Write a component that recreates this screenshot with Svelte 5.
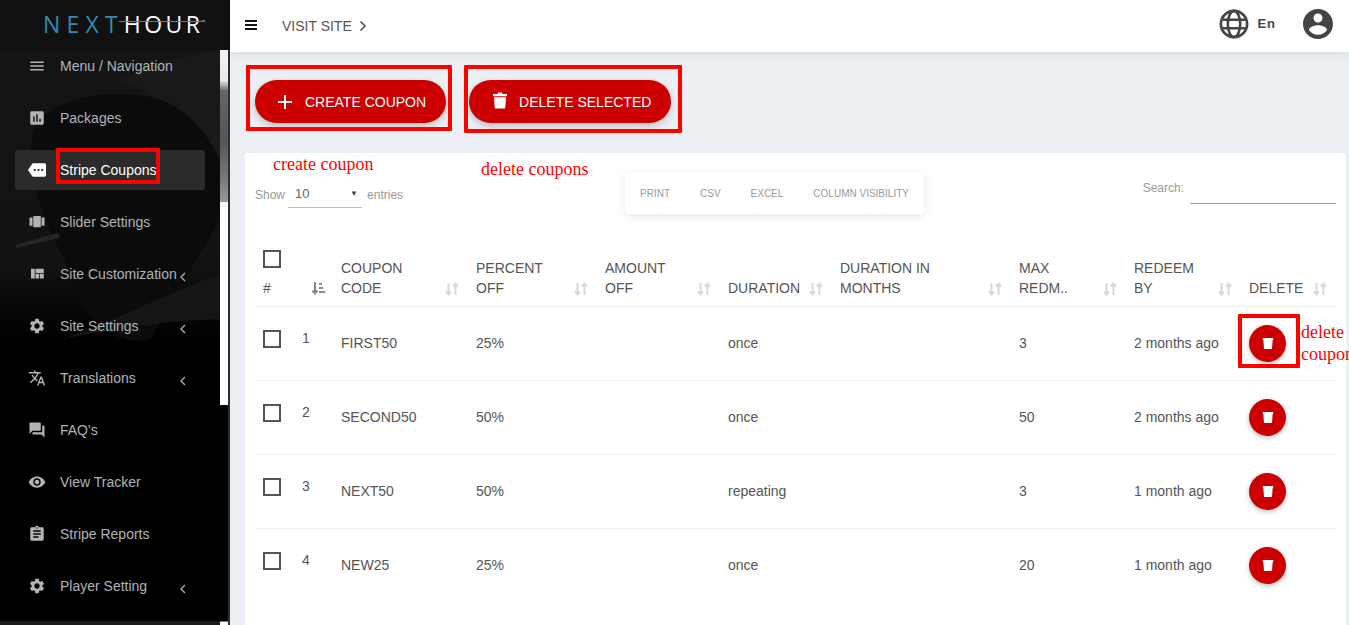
<script>
  const icons = {
    menu: 'M3 18h18v-2H3v2zm0-5h18v-2H3v2zm0-7v2h18V6H3z',
    poll: 'M19 3H5c-1.1 0-2 .9-2 2v14c0 1.1.9 2 2 2h14c1.1 0 2-.9 2-2V5c0-1.1-.9-2-2-2zM9 17H7v-7h2v7zm4 0h-2V7h2v10zm4 0h-2v-4h2v4z',
    more: 'M22 3H7c-.69 0-1.23.35-1.59.88L0 12l5.41 8.11c.36.53.9.89 1.59.89h15c1.1 0 2-.9 2-2V5c0-1.1-.9-2-2-2zM9 13.5c-.83 0-1.5-.67-1.5-1.5s.67-1.5 1.5-1.5 1.5.67 1.5 1.5-.67 1.5-1.5 1.5zm5 0c-.83 0-1.5-.67-1.5-1.5s.67-1.5 1.5-1.5 1.5.67 1.5 1.5-.67 1.5-1.5 1.5zm5 0c-.83 0-1.5-.67-1.5-1.5s.67-1.5 1.5-1.5 1.5.67 1.5 1.5-.67 1.5-1.5 1.5z',
    carousel: 'M7 19h10V4H7v15zm-5-2h4V6H2v11zM18 6v11h4V6h-4z',
    quilt: 'M10 18h5v-6h-5v6zm-6 0h5V5H4v13zm12 0h5v-6h-5v6zM10 5v6h11V5H10z',
    settings: 'M19.14 12.94c.04-.3.06-.61.06-.94 0-.32-.02-.64-.07-.94l2.03-1.58c.18-.14.23-.41.12-.61l-1.92-3.32c-.12-.22-.37-.29-.59-.22l-2.39.96c-.5-.38-1.03-.7-1.62-.94l-.36-2.54c-.04-.24-.24-.41-.48-.41h-3.84c-.24 0-.43.17-.47.41l-.36 2.54c-.59.24-1.13.57-1.62.94l-2.39-.96c-.22-.08-.47 0-.59.22L2.74 8.87c-.12.21-.08.47.12.61l2.03 1.58c-.05.3-.09.63-.09.94s.02.64.07.94l-2.03 1.58c-.18.14-.23.41-.12.61l1.92 3.32c.12.22.37.29.59.22l2.39-.96c.5.38 1.03.7 1.62.94l.36 2.54c.05.24.24.41.48.41h3.84c.24 0 .44-.17.47-.41l.36-2.54c.59-.24 1.13-.56 1.62-.94l2.39.96c.22.08.47 0 .59-.22l1.92-3.32c.12-.22.07-.47-.12-.61l-2.01-1.58zM12 15.6c-1.98 0-3.6-1.62-3.6-3.6s1.62-3.6 3.6-3.6 3.6 1.62 3.6 3.6-1.62 3.6-3.6 3.6z',
    translate: 'M12.87 15.07l-2.54-2.51.03-.03c1.74-1.94 2.98-4.17 3.71-6.53H17V4h-7V2H8v2H1v1.99h11.17C11.5 7.92 10.43 9.75 9 11.35 8.07 10.32 7.3 9.19 6.69 8h-2c.73 1.63 1.73 3.17 2.98 4.56l-5.09 5.02L4 19l5-5 3.11 3.11.76-2.04zM18.5 10h-2L12 22h2l1.12-3h4.75L21 22h2l-4.5-12zm-2.62 7l1.62-4.33L19.12 17h-3.24z',
    forum: 'M21 6h-2v9H6v2c0 .55.45 1 1 1h11l4 4V7c0-.55-.45-1-1-1zm-4 6V3c0-.55-.45-1-1-1H3c-.55 0-1 .45-1 1v14l4-4h10c.55 0 1-.45 1-1z',
    eye: 'M12 4.5C7 4.5 2.73 7.61 1 12c1.73 4.39 6 7.5 11 7.5s9.27-3.11 11-7.5c-1.73-4.39-6-7.5-11-7.5zM12 17c-2.76 0-5-2.24-5-5s2.24-5 5-5 5 2.24 5 5-2.24 5-5 5zm0-8c-1.66 0-3 1.34-3 3s1.34 3 3 3 3-1.34 3-3-1.34-3-3-3z',
    clipboard: 'M19 3h-4.18C14.4 1.84 13.3 1 12 1c-1.3 0-2.4.84-2.82 2H5c-1.1 0-2 .9-2 2v14c0 1.1.9 2 2 2h14c1.1 0 2-.9 2-2V5c0-1.1-.9-2-2-2zm-7 0c.55 0 1 .45 1 1s-.45 1-1 1-1-.45-1-1 .45-1 1-1zm2 14H7v-2h7v2zm3-4H7v-2h10v2zm0-4H7V7h10v2z'
  };

  const nav = [
    { label: 'Menu / Navigation', icon: 'menu' },
    { label: 'Packages', icon: 'poll' },
    { label: 'Stripe Coupons', icon: 'more', active: true },
    { label: 'Slider Settings', icon: 'carousel' },
    { label: 'Site Customization', icon: 'quilt', arrow: true },
    { label: 'Site Settings', icon: 'settings', arrow: true },
    { label: 'Translations', icon: 'translate', arrow: true },
    { label: "FAQ's", icon: 'forum' },
    { label: 'View Tracker', icon: 'eye' },
    { label: 'Stripe Reports', icon: 'clipboard' },
    { label: 'Player Setting', icon: 'settings', arrow: true }
  ];

  const columns = [
    { a: 'COUPON', b: 'CODE' },
    { a: 'PERCENT', b: 'OFF' },
    { a: 'AMOUNT', b: 'OFF' },
    { a: '', b: 'DURATION' },
    { a: 'DURATION IN', b: 'MONTHS' },
    { a: 'MAX', b: 'REDM..' },
    { a: 'REDEEM', b: 'BY' },
    { a: '', b: 'DELETE' }
  ];

  const coupons = [
    { id: 1, code: 'FIRST50', pct: '25%', duration: 'once', max: 3, by: '2 months ago' },
    { id: 2, code: 'SECOND50', pct: '50%', duration: 'once', max: 50, by: '2 months ago' },
    { id: 3, code: 'NEXT50', pct: '50%', duration: 'repeating', max: 3, by: '1 month ago' },
    { id: 4, code: 'NEW25', pct: '25%', duration: 'once', max: 20, by: '1 month ago' }
  ];
</script>

{#snippet sortIcon()}
  <svg class="sort" viewBox="0 0 16 16" width="16" height="16">
    <path d="M4.500 2v11.500M2 10.500l2.500 3 2.500-3" fill="none" stroke="currentColor" stroke-width="2" />
    <path d="M11.500 14V2.500M9 5.500l2.500-3 2.500 3" fill="none" stroke="currentColor" stroke-width="2" />
  </svg>
{/snippet}

<div class="page">
  <aside class="sidebar">
    <div class="brand">
      <span class="logo"><span class="blue">NEXT</span><span class="white">HOUR</span><i class="swoosh"></i></span>
    </div>
    <div class="side-body">
      <svg class="photo" viewBox="0 0 220 572" preserveAspectRatio="none" aria-hidden="true">
        <path d="M118 30 160 12 220 0v115C190 70 160 45 118 30z" fill="#191919" />
        <path d="M33 83C45 50 100 38 150 47c30 6 55 30 70 63v60l-70 120c-40 10-75-30-85-80C45 175 25 125 33 83z" fill="#0b0b0b" />
        <path d="M16 195 58 183 60 188 16 198z" fill="#262626" />
        <path d="M60 290C100 280 160 245 220 225v45C170 270 110 280 60 290z" fill="#151515" />
      </svg>
      <ul class="menu">
        {#each nav as item}
          <li class="item" class:active={item.active}>
            <svg class="ico" viewBox="0 0 24 24" width="18" height="18"><path d={icons[item.icon]} /></svg>
            <span class="label">{item.label}</span>
            {#if item.arrow}
              <svg class="chev" viewBox="0 0 8 10" width="8" height="10"><path d="M6 1 2 5l4 4" fill="none" stroke="currentColor" stroke-width="1.4" /></svg>
            {/if}
          </li>
        {/each}
      </ul>
      <div class="scroll"><div class="scroll-photo"></div></div>
    </div>
    <div class="side-foot"><span></span></div>
  </aside>

  <div class="main">
    <header class="topbar">
      <svg class="burger" viewBox="0 0 12 10" width="12" height="10"><path d="M0 0h12v2H0zM0 4h12v2H0zM0 8h12v2H0z" /></svg>
      <span class="visit">VISIT SITE</span>
      <svg class="visit-arrow" viewBox="0 0 10 12" width="10" height="12"><path d="M2.500 1.500 7 6l-4.500 4.500" fill="none" stroke="currentColor" stroke-width="1.7" /></svg>
      <div class="top-right">
        <svg class="globe" viewBox="0 0 32 32" width="30" height="30">
          <g fill="none" stroke="#444" stroke-width="2.800">
            <circle cx="16" cy="16" r="14" />
            <ellipse cx="16" cy="16" rx="6.600" ry="14" />
            <path d="M4 11.500h24M4 20.500h24" />
          </g>
        </svg>
        <span class="lang">En</span>
        <svg class="user" viewBox="2 2 20 20" width="30" height="30"><path fill="#444" d="M12 2C6.480 2 2 6.480 2 12s4.480 10 10 10 10-4.480 10-10S17.520 2 12 2zm0 3c1.660 0 3 1.340 3 3s-1.340 3-3 3-3-1.340-3-3 1.340-3 3-3zm0 14.200c-2.500 0-4.710-1.280-6-3.220.03-1.990 4-3.080 6-3.080 1.990 0 5.970 1.090 6 3.080-1.290 1.940-3.500 3.220-6 3.220z" /></svg>
      </div>
    </header>

    <div class="content">
      <div class="actions">
        <button class="pill create">
          <svg viewBox="0 0 14 14" width="14" height="14"><path d="M6 0h2v6h6v2H8v6H6V8H0V6h6z" fill="#fff" /></svg>
          CREATE COUPON
        </button>
        <button class="pill remove">
          <svg viewBox="0 0 14 17" width="14" height="17"><path fill="#fff" d="M0 2h4.500L5.200 .5h3.600L9.500 2H14v2.200H0zM1 5.200h12l-.6 9.800c-.1 1-.8 1.500-1.600 1.500H3.200c-.8 0-1.500-.5-1.600-1.500z" /></svg>
          DELETE SELECTED
        </button>
      </div>

      <section class="card">
        <div class="controls">
          <div class="show">
            Show
            <span class="select">10<i class="caret">▼</i></span>
            entries
          </div>
          <div class="exports">
            <span>PRINT</span><span>CSV</span><span>EXCEL</span><span>COLUMN VISIBILITY</span>
          </div>
          <div class="search">
            Search:
            <span class="search-input"></span>
          </div>
        </div>

        <table>
          <colgroup>
            <col style="width:78px" /><col style="width:135px" /><col style="width:129px" /><col style="width:123px" />
            <col style="width:112px" /><col style="width:179px" /><col style="width:115px" /><col style="width:115px" /><col style="width:95px" />
          </colgroup>
          <thead>
            <tr>
              <th class="first">
                <span class="check head-check"></span>
                <div class="hash-row">
                  #
                  <svg class="sort sorted" viewBox="0 0 16 16" width="16" height="16">
                    <path d="M5 2v11M2.500 10.500 5 13.500l2.500-3" fill="none" stroke="currentColor" stroke-width="2" />
                    <path d="M9 3h3v2H9zM9 7h4v2H9zM9 11h6v2H9z" fill="currentColor" />
                  </svg>
                </div>
              </th>
              {#each columns as col}
                <th>
                  <div class="th-inner">
                    <span>{col.a}{#if col.a}<br />{/if}{col.b}</span>
                    {@render sortIcon()}
                  </div>
                </th>
              {/each}
            </tr>
          </thead>
          <tbody>
            {#each coupons as c}
              <tr>
                <td class="first">
                  <div class="id-cell"><span class="check"></span><span class="num">{c.id}</span></div>
                </td>
                <td>{c.code}</td>
                <td>{c.pct}</td>
                <td></td>
                <td>{c.duration}</td>
                <td></td>
                <td>{c.max}</td>
                <td>{c.by}</td>
                <td>
                  <button class="round" aria-label="delete">
                    <svg viewBox="0 0 12 12" width="12" height="12"><path fill="#fff" d="M.8 0h10.400v2.200h-.6L10 11H2L1.400 2.200H.8z" /></svg>
                  </button>
                </td>
              </tr>
            {/each}
          </tbody>
        </table>
      </section>
    </div>
  </div>

  <!-- red annotations drawn on top of the screenshot -->
  <div class="box" style="left:56px;top:148px;width:104px;height:36px"></div>
  <div class="box" style="left:246px;top:65px;width:206px;height:66px"></div>
  <div class="box" style="left:464px;top:65px;width:218px;height:68px"></div>
  <div class="box" style="left:1238px;top:314px;width:62px;height:54px"></div>
  <span class="note" style="left:273px;top:153px">create coupon</span>
  <span class="note" style="left:481px;top:158px">delete coupons</span>
  <span class="note" style="left:1301px;top:321px">delete<br />coupon</span>
</div>

<style>
  :global(body) {
    margin: 0;
    overflow: hidden;
  }
  .page {
    position: relative;
    display: flex;
    width: 1349px;
    height: 625px;
    overflow: hidden;
    font-family: "Liberation Sans", Arial, sans-serif;
    background: #ebeef3;
  }

  /* sidebar */
  .sidebar {
    width: 230px;
    flex: none;
    display: flex;
    flex-direction: column;
    background: #26323a;
  }
  .brand {
    height: 50px;
    flex: none;
    background: #111;
    display: flex;
    align-items: center;
    padding: 0 0 2px 43px;
    box-sizing: border-box;
  }
  .logo {
    position: relative;
    font-family: "Open Sans", sans-serif;
    font-size: 23px;
    font-weight: 400;
    color: #fff;
    line-height: 1;
    white-space: nowrap;
  }
  .blue { color: #2e8cb3; letter-spacing: 6.200px; }
  .white { letter-spacing: 3.400px; }
  .swoosh {
    position: absolute;
    left: 76px;
    right: -2px;
    top: 8px;
    height: 1px;
    background: #777;
  }
  .swoosh::after {
    content: "";
    position: absolute;
    right: 0;
    top: -1px;
    width: 3px;
    height: 2px;
    background: #2e8cb3;
  }
  .side-body {
    position: relative;
    flex: 1;
    display: flex;
    width: 228px;
    min-height: 0;
    background: linear-gradient(180deg, #141414 0, #121212 38%, #050505 46%, #000 52%);
  }
  .photo {
    position: absolute;
    left: 0;
    top: 0;
    width: 220px;
    height: 100%;
  }
  .menu {
    position: relative;
    list-style: none;
    margin: 0;
    padding: 0 15px;
    width: 220px;
    box-sizing: border-box;
    font-size: 14px;
  }
  .item {
    display: flex;
    align-items: center;
    height: 40px;
    margin-bottom: 12px;
    margin-top: -4px;
    padding-left: 13px;
    border-radius: 3px;
    color: #aeb4bb;
  }
  .item + .item { margin-top: 0; }
  .item .ico { fill: #b4b4b4; margin-right: 14px; flex: none; }
  .item.active { background: #2b2b2b; color: #fff; }
  .item.active .ico { fill: #fff; }
  .label { white-space: nowrap; }
  .chev { position: absolute; left: 179px; margin-top: 6px; color: #aaa; }
  .scroll {
    width: 8px;
    margin-left: auto;
    height: 355px;
    background: #fff;
    flex: none;
    position: relative;
  }
  .scroll-photo {
    height: 152px;
    background: linear-gradient(180deg, #f4f4f4 0, #e8e8e8 20%, #666 27%, #555 60%, #7a7a7a 85%, #999 100%);
  }
  .side-foot {
    width: 228px;
    height: 4px;
    flex: none;
    display: flex;
    justify-content: flex-end;
    background: #1a1a1a;
  }
  .side-foot span {
    width: 8px;
    background: #fff;
    border-top: 1px solid #777;
    box-sizing: border-box;
  }

  /* main */
  .main {
    flex: 1;
    min-width: 0;
    display: flex;
    flex-direction: column;
  }
  .topbar {
    height: 52px;
    flex: none;
    background: #fff;
    display: flex;
    align-items: center;
    padding: 0 16px 0 15px;
    box-sizing: border-box;
    box-shadow: 0 2px 8px rgba(0, 0, 0, .08);
    position: relative;
    color: #555;
  }
  .burger { fill: #111; margin-right: 25px; margin-top: -2px; }
  .visit { font-size: 14px; color: #555; }
  .visit-arrow { margin-left: 6px; }
  .top-right {
    margin-left: auto;
    display: flex;
    align-items: center;
  }
  .lang {
    font-size: 13px;
    font-weight: 700;
    letter-spacing: 1px;
    color: #444;
    margin: -5px 27px 0 8px;
  }
  .globe { margin-top: -4px; }
  .user { margin-top: -4px; }
  .content {
    flex: 1;
    padding: 28px 3px 0 15px;
    min-height: 0;
  }
  .actions {
    display: flex;
    gap: 23px;
    margin-left: 10px;
    margin-bottom: 30px;
  }
  .pill {
    display: flex;
    align-items: center;
    height: 43px;
    border: 0;
    border-radius: 22px;
    background: #c00;
    color: #fff;
    font-family: inherit;
    font-size: 14px;
    padding: 0 20px 0 23px;
    gap: 13px;
    box-shadow: 0 3px 6px rgba(0, 0, 0, .2);
  }
  .remove { padding-left: 24px; gap: 12px; }
  .remove svg { margin-top: -2px; }

  /* card */
  .card {
    background: #fff;
    border-radius: 4px;
    padding: 0 10px;
    height: 500px;
    box-sizing: border-box;
  }
  .controls {
    position: relative;
    display: flex;
    justify-content: space-between;
    height: 85px;
    color: #999;
    font-size: 12px;
  }
  .show {
    margin-top: 27px;
    display: flex;
    align-items: center;
    height: 30px;
  }
  .select {
    display: inline-flex;
    justify-content: space-between;
    align-items: center;
    width: 74px;
    height: 24px;
    margin-top: 1px;
    box-sizing: border-box;
    margin-left: 3px;
    margin-right: 5px;
    padding: 0 4px 3px 7px;
    border-bottom: 1px solid #bbb;
    color: #666;
    font-size: 13px;
  }
  .caret { font-style: normal; font-size: 8px; color: #444; }
  .exports {
    position: absolute;
    left: 370px;
    top: 20px;
    height: 41px;
    display: flex;
    align-items: center;
    padding: 0 15px;
    gap: 30px;
    background: #fff;
    border-radius: 4px;
    font-size: 10px;
    color: #999;
    box-shadow: 0 2px 10px rgba(0, 0, 0, .1);
  }
  .search {
    display: flex;
    gap: 6px;
    margin-top: 28px;
    height: 23px;
  }
  .search-input {
    width: 146px;
    height: 22px;
    border-bottom: 1px solid #999;
  }

  /* table */
  table {
    border-collapse: collapse;
    table-layout: fixed;
    width: 1081px;
    font-size: 14px;
    color: #555;
  }
  th {
    font-weight: 400;
    text-align: left;
    vertical-align: bottom;
    padding: 0 8px 8px;
    line-height: 20px;
    border-bottom: 1px solid #eee;
    height: 60px;
  }
  .th-inner {
    display: flex;
    justify-content: space-between;
    align-items: flex-end;
  }
  .sort { color: #d8d8d8; flex: none; margin-bottom: 1px; }
  .sorted { color: #888; }
  td {
    height: 71px;
    padding: 0 8px 2px;
    border-bottom: 1px solid #f0f0f0;
    color: #555;
  }
  tbody tr:last-child td { border-bottom: 0; }
  .first { padding-right: 7px; }
  .head-check { display: block; margin-bottom: 5px; }
  .hash-row {
    display: flex;
    justify-content: space-between;
    align-items: center;
  }
  .check {
    display: inline-block;
    width: 18px;
    height: 18px;
    box-sizing: border-box;
    border: 2px solid #555;
    flex: none;
  }
  .id-cell {
    display: flex;
    align-items: center;
    gap: 21px;
    margin-top: -8px;
  }
  .num { font-size: 14px; margin-top: -2px; }
  .round {
    display: flex;
    align-items: center;
    justify-content: center;
    width: 37px;
    height: 37px;
    margin-top: 2px;
    padding: 0;
    border: 0;
    border-radius: 50%;
    background: #c00;
    box-shadow: 0 2px 5px rgba(0, 0, 0, .25);
  }

  /* annotations */
  .box {
    position: absolute;
    box-sizing: border-box;
    border: 4px solid #f00;
    border-radius: 1px;
  }
  .note {
    position: absolute;
    font-family: "Liberation Serif", serif;
    font-size: 18px;
    line-height: 22px;
    color: #f00;
    white-space: nowrap;
  }
</style>
